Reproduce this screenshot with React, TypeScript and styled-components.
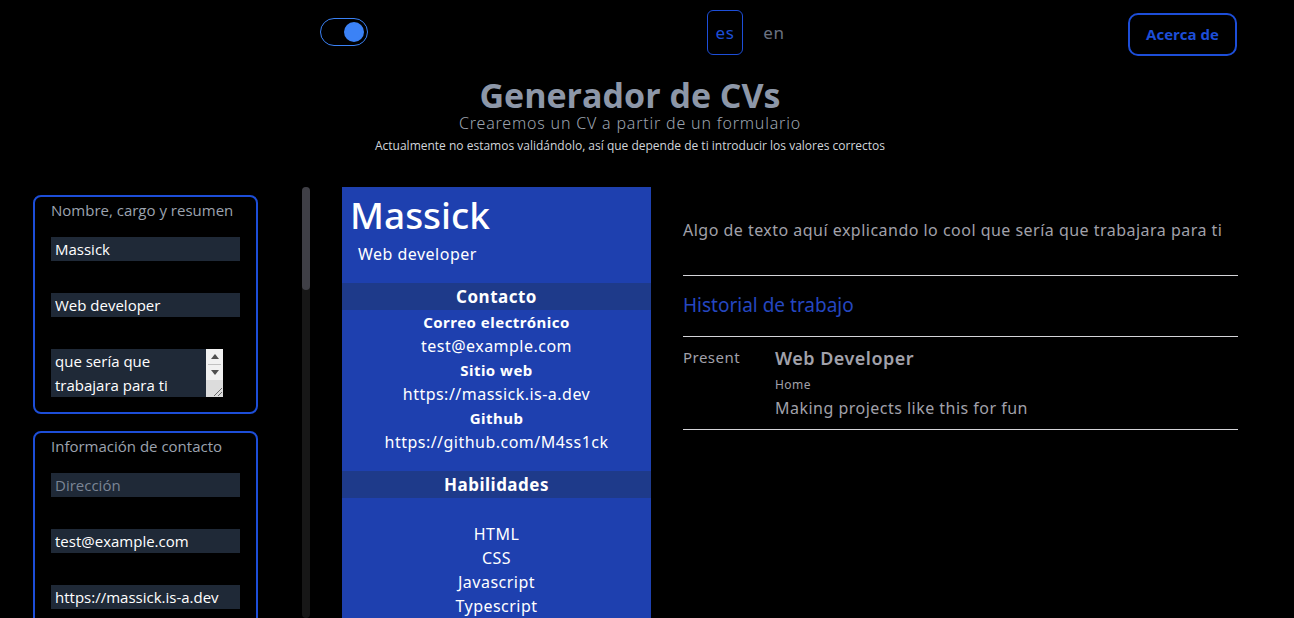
import React, { useEffect, useRef } from "react";
import styled, { createGlobalStyle } from "styled-components";

const GlobalStyle = createGlobalStyle`
  html, body { margin: 0; padding: 0; background: #000; overflow: hidden; }
  body { font-family: "Open Sans", "Noto Sans", sans-serif; color: #d1d5db; }
  * { box-sizing: border-box; }
`;

const Page = styled.div`
  width: 1294px;
  height: 618px;
  overflow: hidden;
  background: #000;
`;

const Header = styled.header`
  height: 64px;
  display: flex;
  align-items: center;
  justify-content: space-between;
  padding: 0 57px 0 320px;
`;

const Toggle = styled.div`
  width: 48px;
  height: 28px;
  border: 1.5px solid #3b82f6;
  border-radius: 14px;
  display: flex;
  align-items: center;
  justify-content: flex-end;
  padding: 0 3px;
`;

const Knob = styled.div`
  width: 20px;
  height: 20px;
  border-radius: 50%;
  background: #3b82f6;
`;

const LangGroup = styled.div`
  display: flex;
  align-items: center;
  gap: 19px;
  margin-left: -4px;
`;

const LangButton = styled.button<{ $active?: boolean }>`
  font-family: "Noto Sans", sans-serif;
  font-size: 17px;
  letter-spacing: 0.03em;
  background: transparent;
  border: 1px solid ${(p) => (p.$active ? "#1d4ed8" : "transparent")};
  color: ${(p) => (p.$active ? "#1d4ed8" : "#6b7280")};
  border-radius: 6px;
  height: 45px;
  padding: 0 ${(p) => (p.$active ? "8px" : "0")};
  cursor: pointer;
`;

const AboutButton = styled.button`
  width: 109px;
  height: 43px;
  margin-top: 4px;
  border: 2px solid #1d4ed8;
  border-radius: 10px;
  background: transparent;
  color: #1d4ed8;
  font-family: "Open Sans", sans-serif;
  font-weight: 700;
  font-size: 15px;
`;

const Hero = styled.div`
  width: 1260px;
  display: flex;
  flex-direction: column;
  align-items: center;
  padding-top: 13px;
`;

const Title = styled.h1`
  margin: 0;
  font-family: "Open Sans", sans-serif;
  font-weight: 700;
  font-size: 34px;
  line-height: 36px;
  color: #8d97a8;
`;

const Subtitle = styled.h2`
  margin: 0;
  font-family: "Noto Sans", sans-serif;
  font-weight: 300;
  font-size: 16px;
  letter-spacing: 0.05em;
  line-height: 20px;
  color: #9ca3af;
`;

const Note = styled.p`
  margin: 5px 0 0;
  font-family: "Open Sans", sans-serif;
  font-size: 12px;
  line-height: 16px;
  color: #d1d5db;
`;

const Main = styled.main`
  display: flex;
  align-items: flex-start;
  margin-top: 33px;
  padding-left: 33px;
`;

const FormColumn = styled.div`
  width: 225px;
  display: flex;
  flex-direction: column;
  gap: 17px;
  padding-top: 8px;
`;

const Panel = styled.fieldset`
  margin: 0;
  border: 2px solid #1d4ed8;
  border-radius: 8px;
  padding: 3px 16px 15px;
  display: flex;
  flex-direction: column;
  min-width: 0;
`;

const PanelLabel = styled.div`
  font-size: 15px;
  line-height: 20px;
  color: #9ca3af;
  margin-bottom: 17px;
`;

const Fields = styled.div`
  display: flex;
  flex-direction: column;
  gap: 32px;
`;

const Input = styled.input`
  width: 189px;
  height: 24px;
  border: none;
  outline: none;
  background: #1f2937;
  color: #fff;
  font-family: "Open Sans", sans-serif;
  font-size: 15px;
  padding: 0 4px;
  &::placeholder { color: #7b8595; }
`;

const TextAreaBox = styled.div`
  width: 172px;
  height: 48px;
  display: flex;
  background: #1f2937;
`;

const TextArea = styled.textarea`
  flex: 1;
  min-width: 0;
  height: 48px;
  border: none;
  outline: none;
  background: transparent;
  color: #fff;
  font-family: "Open Sans", sans-serif;
  font-size: 15px;
  line-height: 24px;
  padding: 0 4px;
  overflow: hidden;
  resize: none;
`;

const NativeBar = styled.div`
  width: 17px;
  display: flex;
  flex-direction: column;
  background: #f1f1f1;
`;

const ArrowBtn = styled.div`
  height: 15px;
  display: flex;
  align-items: center;
  justify-content: center;
`;

const BarThumb = styled.div`
  height: 1px;
  margin: 0 2px;
  background: #c1c1c1;
`;

const Corner = styled.div`
  flex: 1;
  background: #dcdcdc;
  display: flex;
  align-items: flex-end;
  justify-content: flex-end;
`;

const ScrollTrack = styled.div`
  width: 8px;
  height: 431px;
  margin-left: 44px;
  background: #171717;
  border-radius: 4px;
  display: flex;
  flex-direction: column;
`;

const ScrollThumb = styled.div`
  height: 103px;
  background: #3f3f46;
  border-radius: 4px;
`;

const Resume = styled.section`
  display: flex;
  margin-left: 32px;
  font-family: "Noto Sans", sans-serif;
  letter-spacing: 0.03em;
`;

const Sidebar = styled.aside`
  width: 309px;
  height: 440px;
  background: #1e40af;
  color: #fff;
  display: flex;
  flex-direction: column;
`;

const Name = styled.div`
  font-size: 37px;
  font-weight: 500;
  letter-spacing: 0;
  line-height: 44px;
  margin-top: 6px;
  padding-left: 8px;
`;

const Role = styled.div`
  font-size: 16px;
  line-height: 20px;
  margin-top: 7px;
  padding-left: 16px;
`;

const Band = styled.div<{ $gap: number }>`
  margin-top: ${(p) => p.$gap}px;
  height: 27px;
  background: #1e3a8a;
  font-size: 17px;
  font-weight: 700;
  line-height: 27px;
  text-align: center;
`;

const Line = styled.div<{ $bold?: boolean }>`
  text-align: center;
  font-size: ${(p) => (p.$bold ? "15px" : "16px")};
  font-weight: ${(p) => (p.$bold ? 700 : 400)};
  line-height: 24px;
`;

const SkillList = styled.ul`
  list-style: none;
  margin: 24px 0 0;
  padding: 0;
`;

const Content = styled.div`
  width: 587px;
  padding: 33px 0 0 32px;
  display: flex;
  flex-direction: column;
`;

const Summary = styled.p`
  margin: 0;
  font-size: 16px;
  line-height: 20px;
  color: #a1a1aa;
`;

const Rule = styled.hr<{ $top: number }>`
  margin: ${(p) => p.$top}px 0 0;
  border: none;
  border-top: 1px solid #d4d4d8;
`;

const SectionTitle = styled.h3`
  margin: 17px 0 0;
  font-size: 19px;
  font-weight: 400;
  letter-spacing: 0;
  line-height: 24px;
  color: #2547c0;
`;

const Job = styled.div`
  display: grid;
  grid-template-columns: 92px 1fr;
  margin-top: 10px;
`;

const JobDate = styled.div`
  font-size: 15px;
  line-height: 20px;
  color: #a1a1aa;
`;

const JobBody = styled.div`
  display: flex;
  flex-direction: column;
`;

const JobTitle = styled.div`
  font-size: 18px;
  font-weight: 600;
  line-height: 22px;
  color: #a1a1aa;
`;

const JobPlace = styled.div`
  font-size: 12px;
  line-height: 16px;
  margin-top: 8px;
  color: #a1a1aa;
`;

const JobDesc = styled.div`
  font-size: 16px;
  line-height: 20px;
  margin-top: 5px;
  color: #a1a1aa;
`;

export default function App() {
  const taRef = useRef<HTMLTextAreaElement>(null);
  useEffect(() => {
    if (taRef.current) taRef.current.scrollTop = taRef.current.scrollHeight;
  }, []);
  const summary = "Algo de texto aquí explicando lo cool que sería que trabajara para ti";
  return (
    <Page>
      <GlobalStyle />
      <Header>
        <Toggle>
          <Knob />
        </Toggle>
        <LangGroup>
          <LangButton $active>es</LangButton>
          <LangButton>en</LangButton>
        </LangGroup>
        <AboutButton>Acerca de</AboutButton>
      </Header>
      <Hero>
        <Title>Generador de CVs</Title>
        <Subtitle>Crearemos un CV a partir de un formulario</Subtitle>
        <Note>Actualmente no estamos validándolo, así que depende de ti introducir los valores correctos</Note>
      </Hero>
      <Main>
        <FormColumn>
          <Panel>
            <PanelLabel>Nombre, cargo y resumen</PanelLabel>
            <Fields>
              <Input defaultValue="Massick" />
              <Input defaultValue="Web developer" />
              <TextAreaBox>
                <TextArea ref={taRef} defaultValue={summary} />
                <NativeBar>
                  <ArrowBtn>
                    <svg width="8" height="5" viewBox="0 0 8 5"><path d="M0 5 L4 0 L8 5 Z" fill="#505050" /></svg>
                  </ArrowBtn>
                  <BarThumb />
                  <ArrowBtn>
                    <svg width="8" height="5" viewBox="0 0 8 5"><path d="M0 0 L8 0 L4 5 Z" fill="#505050" /></svg>
                  </ArrowBtn>
                  <Corner>
                    <svg width="12" height="12" viewBox="0 0 12 12">
                      <path d="M11 3 L3 11 M11 7 L7 11" stroke="#6b6b6b" strokeWidth="1" />
                    </svg>
                  </Corner>
                </NativeBar>
              </TextAreaBox>
            </Fields>
          </Panel>
          <Panel>
            <PanelLabel>Información de contacto</PanelLabel>
            <Fields>
              <Input placeholder="Dirección" />
              <Input defaultValue="test@example.com" />
              <Input defaultValue="https://massick.is-a.dev" />
            </Fields>
          </Panel>
        </FormColumn>
        <ScrollTrack>
          <ScrollThumb />
        </ScrollTrack>
        <Resume>
          <Sidebar>
            <Name>Massick</Name>
            <Role>Web developer</Role>
            <Band $gap={19}>Contacto</Band>
            <Line $bold>Correo electrónico</Line>
            <Line>test@example.com</Line>
            <Line $bold>Sitio web</Line>
            <Line>https://massick.is-a.dev</Line>
            <Line $bold>Github</Line>
            <Line>https://github.com/M4ss1ck</Line>
            <Band $gap={17}>Habilidades</Band>
            <SkillList>
              <Line as="li">HTML</Line>
              <Line as="li">CSS</Line>
              <Line as="li">Javascript</Line>
              <Line as="li">Typescript</Line>
            </SkillList>
          </Sidebar>
          <Content>
            <Summary>{summary}</Summary>
            <Rule $top={35} />
            <SectionTitle>Historial de trabajo</SectionTitle>
            <Rule $top={19} />
            <Job>
              <JobDate>Present</JobDate>
              <JobBody>
                <JobTitle>Web Developer</JobTitle>
                <JobPlace>Home</JobPlace>
                <JobDesc>Making projects like this for fun</JobDesc>
              </JobBody>
            </Job>
            <Rule $top={11} />
          </Content>
        </Resume>
      </Main>
    </Page>
  );
}
